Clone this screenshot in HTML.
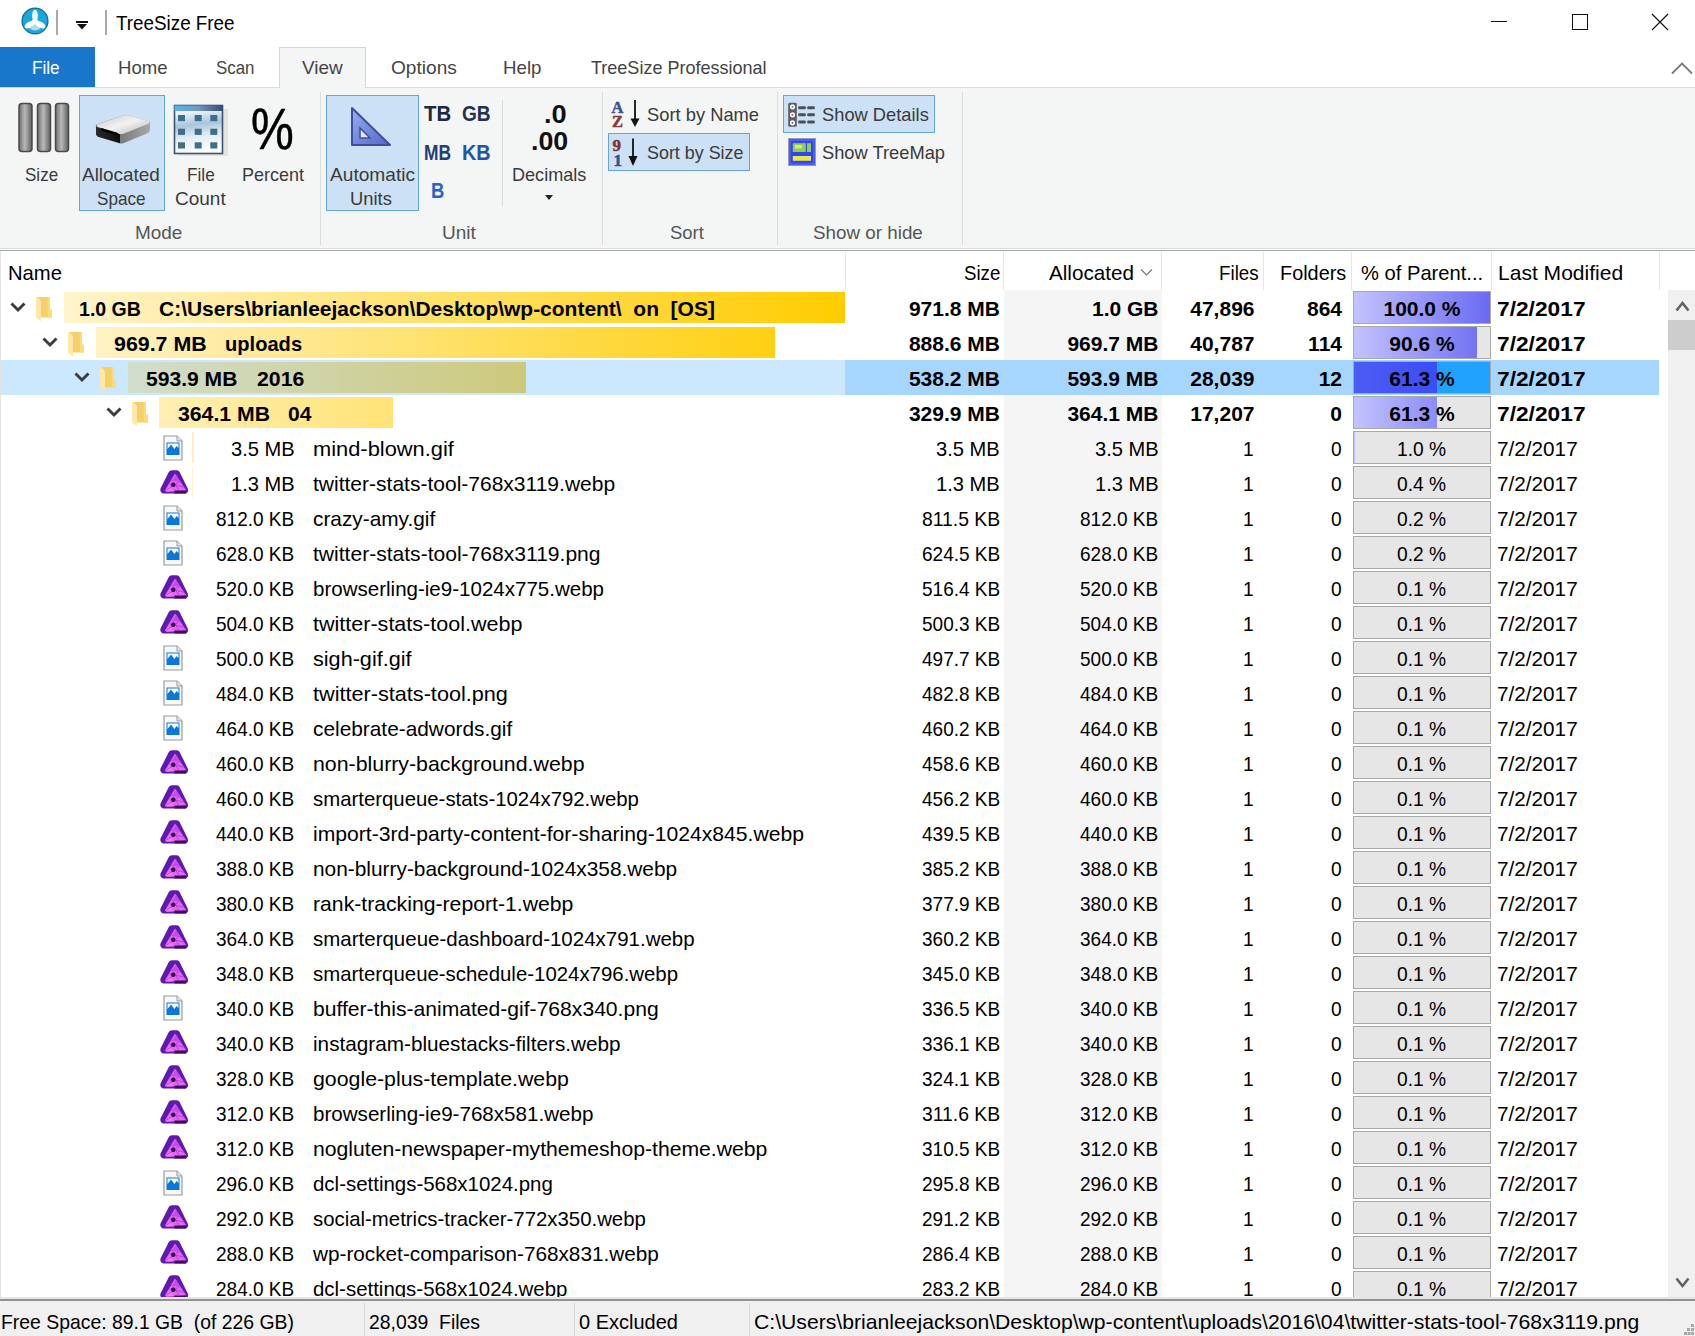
<!DOCTYPE html>
<html><head><meta charset="utf-8"><title>TreeSize Free</title>
<style>
html,body{margin:0;padding:0}
body{width:1695px;height:1336px;overflow:hidden;position:relative;background:#fff;font-family:"Liberation Sans",sans-serif;color:#000}
.a{position:absolute}
.t{position:absolute;white-space:pre;line-height:1.117;}
</style></head><body>
<svg class="a" style="left:20px;top:6px" width="30" height="30" viewBox="0 0 30 30">
<circle cx="15" cy="15" r="12.9" fill="#19a7dd" stroke="#0e6f99" stroke-width="1.3"/>
<path d="M8.5 21.5 Q15 27.5 21.5 21.5 L15 16 Z" fill="#a9dcf0"/>
<ellipse cx="15" cy="9.6" rx="2.9" ry="5.8" fill="#fff"/>
<ellipse cx="15" cy="9.6" rx="2.9" ry="5.8" fill="#fff" transform="rotate(120 15 15.6)"/>
<ellipse cx="15" cy="9.6" rx="2.9" ry="5.8" fill="#fff" transform="rotate(240 15 15.6)"/>
<circle cx="15" cy="15.6" r="3" fill="#fff"/>
</svg>
<div class="a" style="left:56px;top:10px;width:2px;height:25px;background:#a9a9a9;"></div>
<div class="a" style="left:76px;top:21px;width:12px;height:2px;background:#111;"></div>
<svg class="a" style="left:77px;top:24px" width="10" height="6"><path d="M0 0 L10 0 L5 5.5 Z" fill="#111"/></svg>
<div class="a" style="left:105px;top:10px;width:2px;height:25px;background:#a9a9a9;"></div>
<div class="t" style="top:11.00px;font-size:21px;left:115.50px;transform:scaleX(0.8964);transform-origin:0 0;">TreeSize Free</div>
<div class="a" style="left:1491px;top:21px;width:16px;height:1px;background:#111;"></div>
<div class="a" style="left:1572px;top:14px;width:14px;height:14px;border:1px solid #111"></div>
<svg class="a" style="left:1651px;top:13px" width="18" height="18"><path d="M1 1 L17 17 M17 1 L1 17" stroke="#111" stroke-width="1.1"/></svg>
<div class="a" style="left:0px;top:47px;width:95px;height:40px;background:#1977cb;"></div>
<div class="a" style="left:0px;top:87px;width:1695px;height:1px;background:#d9dadb;"></div>
<div class="a" style="left:279px;top:47px;width:85px;height:41px;background:#f4f5f5;border:1px solid #d6d6d6;border-bottom:none"></div>
<div class="t" style="top:56.80px;font-size:19px;color:#fff;left:32.20px;transform:scaleX(0.9023);transform-origin:0 0;">File</div>
<div class="t" style="top:56.80px;font-size:19px;color:#444;left:118.00px;transform:scaleX(0.9777);transform-origin:0 0;">Home</div>
<div class="t" style="top:56.80px;font-size:19px;color:#444;left:215.50px;transform:scaleX(0.8887);transform-origin:0 0;">Scan</div>
<div class="t" style="top:56.80px;font-size:19px;color:#444;left:302.00px;transform:scaleX(0.9963);transform-origin:0 0;">View</div>
<div class="t" style="top:56.80px;font-size:19px;color:#444;left:390.60px;transform:scaleX(1.0053);transform-origin:0 0;">Options</div>
<div class="t" style="top:56.80px;font-size:19px;color:#444;left:503.00px;transform:scaleX(0.9835);transform-origin:0 0;">Help</div>
<div class="t" style="top:56.80px;font-size:19px;color:#444;left:590.60px;transform:scaleX(0.9479);transform-origin:0 0;">TreeSize Professional</div>
<svg class="a" style="left:1670px;top:60px" width="24" height="16"><path d="M2 13.5 L12 3.5 L22 13.5" fill="none" stroke="#7a7a7a" stroke-width="1.8"/></svg>
<div class="a" style="left:0px;top:88px;width:1695px;height:160px;background:#f4f5f5;"></div>
<div class="a" style="left:0px;top:248px;width:1695px;height:1px;background:#dcdcdc;"></div>
<div class="a" style="left:0px;top:249px;width:1695px;height:1px;background:#ffffff;"></div>
<div class="a" style="left:0px;top:250px;width:1695px;height:1px;background:#a9aaad;"></div>
<svg class="a" style="left:17px;top:102px" width="54" height="51" viewBox="0 0 54 51">
<defs><linearGradient id="gb" x1="0" x2="1"><stop offset="0" stop-color="#6d6d6d"/><stop offset=".45" stop-color="#b9b9b9"/><stop offset="1" stop-color="#5e5e5e"/></linearGradient></defs>
<rect x="2" y="1.5" width="13" height="48" rx="3" fill="url(#gb)" stroke="#4a4a4a" stroke-width="1.5"/>
<rect x="20.5" y="1.5" width="13" height="48" rx="3" fill="url(#gb)" stroke="#4a4a4a" stroke-width="1.5"/>
<rect x="38.5" y="1.5" width="13" height="48" rx="3" fill="url(#gb)" stroke="#4a4a4a" stroke-width="1.5"/>
</svg>
<div class="t" style="top:163.81px;font-size:19px;color:#3a3a3a;left:25.30px;transform:scaleX(0.8957);transform-origin:0 0;">Size</div>
<div class="a" style="left:79px;top:95px;width:86px;height:116px;background:#cce1f6;border:1px solid #64a3e4;box-sizing:border-box;"></div>
<svg class="a" style="left:93px;top:112px" width="60" height="36" viewBox="0 0 60 36">
<defs><linearGradient id="dtop" x1="0" y1="0" x2="1" y2="1"><stop offset="0" stop-color="#c9c9c9"/><stop offset=".5" stop-color="#f2f2f2"/><stop offset="1" stop-color="#b5b5b5"/></linearGradient>
<linearGradient id="dfl" x1="0" y1="0" x2="1" y2="0"><stop offset="0" stop-color="#2b2b2b"/><stop offset="1" stop-color="#0d0d0d"/></linearGradient>
<linearGradient id="dr" x1="0" y1="0" x2="1" y2="0"><stop offset="0" stop-color="#555"/><stop offset="1" stop-color="#a8a8a8"/></linearGradient></defs>
<path d="M3 15 Q2 13 5 12 L30 3.5 Q33 2.5 36 3.5 L55 9 Q58 10 57 12 L57 18 Q57 20 54 21.5 L31 31 Q28 32 25 31 L6 25 Q3 24 3 21 Z" fill="url(#dr)"/>
<path d="M3 15 L27 22 L27 31 L6 25 Q3 24 3 21 Z" fill="url(#dfl)"/>
<path d="M5 12 L30 3.5 Q33 2.5 36 3.5 L55 9 Q58 10 55 12 L31 21.5 Q28 22.5 25 21.5 L5 15 Q2 13.5 5 12 Z" fill="url(#dtop)"/>
<path d="M9 17.5 L24 22" stroke="#000" stroke-width="2.5" stroke-linecap="round"/>
</svg>
<div class="t" style="top:163.81px;font-size:19px;color:#3a3a3a;left:82.20px;transform:scaleX(0.9964);transform-origin:0 0;">Allocated</div>
<div class="t" style="top:187.81px;font-size:19px;color:#3a3a3a;left:96.60px;transform:scaleX(0.9004);transform-origin:0 0;">Space</div>
<svg class="a" style="left:173px;top:104px" width="58" height="53" viewBox="0 0 58 53">
<defs><linearGradient id="gfc" x1="0" y1="0" x2=".15" y2="1"><stop offset="0" stop-color="#f6fafc"/><stop offset=".2" stop-color="#e6f0f6"/><stop offset=".45" stop-color="#a9c6d9"/><stop offset=".7" stop-color="#e2edf3"/><stop offset="1" stop-color="#fafcfd"/></linearGradient>
<linearGradient id="gfs" x1="0" x2="1"><stop offset="0" stop-color="#5ab4ea"/><stop offset=".5" stop-color="#6f98c0"/><stop offset="1" stop-color="#334e78"/></linearGradient></defs>
<rect x="5" y="5" width="50" height="47" fill="#d8d8d8" opacity=".6"/>
<rect x="1.5" y="1.5" width="48" height="48" fill="url(#gfc)" stroke="#3c5470" stroke-width="1.6"/>
<rect x="1.5" y="1.5" width="48" height="5.5" fill="url(#gfs)"/>
<g fill="#3f6d8c"><rect x="5" y="11" width="7" height="6.2"/><rect x="21.7" y="11" width="7" height="6.2"/><rect x="37.3" y="11" width="7" height="6.2"/>
<rect x="5" y="24.7" width="7" height="6.2"/><rect x="21.7" y="24.7" width="7" height="6.2"/><rect x="37.3" y="24.7" width="7" height="6.2"/>
<rect x="5" y="38.3" width="7" height="6.2"/><rect x="21.7" y="38.3" width="7" height="6.2"/><rect x="37.3" y="38.3" width="7" height="6.2"/></g>
</svg>
<div class="t" style="top:163.81px;font-size:19px;color:#3a3a3a;left:186.50px;transform:scaleX(0.9055);transform-origin:0 0;">File</div>
<div class="t" style="top:187.81px;font-size:19px;color:#3a3a3a;left:175.20px;transform:scaleX(0.9994);transform-origin:0 0;">Count</div>
<div class="t" style="top:96.51px;font-size:58px;left:251.20px;transform:scaleX(0.8291);transform-origin:0 0;-webkit-text-stroke:0.5px #000;">%</div>
<div class="t" style="top:163.81px;font-size:19px;color:#3a3a3a;left:241.80px;transform:scaleX(0.9457);transform-origin:0 0;">Percent</div>
<div class="t" style="top:221.50px;font-size:19px;color:#555;left:134.70px;transform:scaleX(0.9958);transform-origin:0 0;">Mode</div>
<div class="a" style="left:320px;top:92px;width:1px;height:153px;background:#dcdcdc;"></div>
<div class="a" style="left:326px;top:95px;width:93px;height:116px;background:#cce1f6;border:1px solid #64a3e4;box-sizing:border-box;"></div>
<svg class="a" style="left:349px;top:106px" width="44" height="42" viewBox="0 0 44 42">
<defs><linearGradient id="tri" x1="0" y1="0" x2="1" y2="1"><stop offset="0" stop-color="#9aaef0"/><stop offset="1" stop-color="#5067c8"/></linearGradient></defs>
<path d="M3 2 L41 39 L3 39 Z" fill="url(#tri)" stroke="#3f4fa0" stroke-width="2" stroke-linejoin="round"/>
<path d="M11 22 L21 32 L11 32 Z" fill="#dfe7fb" stroke="#3f4fa0" stroke-width="1.5"/>
</svg>
<div class="t" style="top:163.81px;font-size:19px;color:#3a3a3a;left:329.50px;transform:scaleX(1.0065);transform-origin:0 0;">Automatic</div>
<div class="t" style="top:187.81px;font-size:19px;color:#3a3a3a;left:350.40px;transform:scaleX(0.9672);transform-origin:0 0;">Units</div>
<div class="t" style="top:101.59px;font-size:22px;font-weight:700;color:#1c2740;left:424.20px;transform:scaleX(0.9227);transform-origin:0 0;">TB</div>
<div class="t" style="top:101.59px;font-size:22px;font-weight:700;color:#223253;left:461.70px;transform:scaleX(0.8667);transform-origin:0 0;">GB</div>
<div class="t" style="top:140.89px;font-size:22px;font-weight:700;color:#213f78;left:424.00px;transform:scaleX(0.7892);transform-origin:0 0;">MB</div>
<div class="t" style="top:140.89px;font-size:22px;font-weight:700;color:#2255a8;left:461.70px;transform:scaleX(0.8997);transform-origin:0 0;">KB</div>
<div class="t" style="top:179.09px;font-size:22px;font-weight:700;color:#2a63c4;left:430.70px;transform:scaleX(0.8396);transform-origin:0 0;">B</div>
<div class="a" style="left:502px;top:100px;width:1px;height:107px;background:#dcdcdc;"></div>
<div class="t" style="top:99.77px;font-size:26px;font-weight:700;color:#111;left:544.30px;transform:scaleX(1.0456);transform-origin:0 0;">.0</div>
<div class="t" style="top:126.87px;font-size:26px;font-weight:700;color:#111;left:530.70px;transform:scaleX(1.0293);transform-origin:0 0;">.00</div>
<div class="t" style="top:164.21px;font-size:19px;color:#3a3a3a;left:511.90px;transform:scaleX(0.9515);transform-origin:0 0;">Decimals</div>
<svg class="a" style="left:545px;top:195px" width="9" height="6"><path d="M0 0 L8 0 L4 5 Z" fill="#222"/></svg>
<div class="t" style="top:221.50px;font-size:19px;color:#555;left:441.60px;transform:scaleX(1.0024);transform-origin:0 0;">Unit</div>
<div class="a" style="left:602px;top:92px;width:1px;height:153px;background:#dcdcdc;"></div>
<svg class="a" style="left:611px;top:99px" width="32" height="30" viewBox="0 0 32 30">
<text x="0.5" y="13.5" font-family="Liberation Serif" font-weight="700" font-size="16.5" fill="#3a5395" stroke="#3a5395" stroke-width=".5">A</text>
<text x="1" y="28" font-family="Liberation Serif" font-weight="700" font-size="16.5" fill="#8b3838" stroke="#8b3838" stroke-width=".5">Z</text>
<path d="M24 1 L24 24" stroke="#111" stroke-width="1.8"/><path d="M19.5 19.5 L24 28 L28.5 19.5 Z" fill="#111"/>
</svg>
<div class="t" style="top:104.31px;font-size:19px;color:#3a3a3a;left:646.70px;transform:scaleX(0.9648);transform-origin:0 0;">Sort by Name</div>
<div class="a" style="left:608px;top:133px;width:142px;height:38px;background:#cce1f6;border:1px solid #64a3e4;box-sizing:border-box;"></div>
<svg class="a" style="left:612px;top:137px" width="32" height="30" viewBox="0 0 32 30">
<text x="0.5" y="14" font-family="Liberation Serif" font-weight="700" font-size="17" fill="#7e3131" stroke="#7e3131" stroke-width=".5">9</text>
<text x="1.5" y="28.5" font-family="Liberation Serif" font-weight="700" font-size="17" fill="#34508f" stroke="#34508f" stroke-width=".5">1</text>
<path d="M21 1.5 L21 24" stroke="#111" stroke-width="1.8"/><path d="M16.5 19 L21 29 L25.5 19 Z" fill="#111"/>
</svg>
<div class="t" style="top:142.11px;font-size:19px;color:#3a3a3a;left:646.70px;transform:scaleX(0.9413);transform-origin:0 0;">Sort by Size</div>
<div class="t" style="top:221.50px;font-size:19px;color:#555;left:670.30px;transform:scaleX(0.9723);transform-origin:0 0;">Sort</div>
<div class="a" style="left:777px;top:92px;width:1px;height:153px;background:#dcdcdc;"></div>
<div class="a" style="left:783px;top:95px;width:152px;height:38px;background:#cce1f6;border:1px solid #64a3e4;box-sizing:border-box;"></div>
<svg class="a" style="left:788px;top:102px" width="28" height="26" viewBox="0 0 28 26">
<rect x="0.2" y="0.8" width="8.6" height="24" rx="1.5" fill="#5a5f66"/>
<circle cx="4.5" cy="4.8" r="2.6" fill="#fafafa"/><circle cx="4.5" cy="12.8" r="2.6" fill="#fafafa"/><circle cx="4.5" cy="20.8" r="2.6" fill="#fafafa"/>
<circle cx="4.5" cy="4.8" r=".9" fill="#4a9a4a"/><circle cx="4.5" cy="12.8" r="1" fill="#e04a30"/><circle cx="4.5" cy="20.8" r=".9" fill="#3a5ac0"/>
<g fill="#4a4f58"><rect x="10.2" y="4.3" width="7.6" height="3" rx="1"/><rect x="19.2" y="4.3" width="7.6" height="3" rx="1"/><rect x="10.2" y="11.3" width="7.6" height="3" rx="1"/><rect x="19.2" y="11.3" width="7.6" height="3" rx="1"/><rect x="10.2" y="18.4" width="7.6" height="3" rx="1"/><rect x="19.2" y="18.4" width="7.6" height="3" rx="1"/></g>
</svg>
<div class="t" style="top:104.31px;font-size:19px;color:#3a3a3a;left:821.60px;transform:scaleX(0.9633);transform-origin:0 0;">Show Details</div>
<svg class="a" style="left:788px;top:138px" width="28" height="28" viewBox="0 0 28 28">
<rect x="0.5" y="0.5" width="27" height="27" fill="#3046f2" stroke="#9a9aa8" stroke-width="1"/>
<rect x="2" y="2" width="24" height="24" fill="none" stroke="#5a6cff" stroke-width="1.2"/>
<rect x="4.8" y="5.2" width="13" height="8.8" fill="#8fd04a"/><rect x="7" y="7" width="7" height="3.5" fill="#d8e880"/>
<rect x="19" y="5.2" width="4" height="8.8" fill="#8fd04a"/>
<rect x="4.8" y="18" width="18.2" height="4.8" fill="#e8e850"/>
</svg>
<div class="t" style="top:142.11px;font-size:19px;color:#3a3a3a;left:821.60px;transform:scaleX(0.9626);transform-origin:0 0;">Show TreeMap</div>
<div class="t" style="top:221.50px;font-size:19px;color:#555;left:812.70px;transform:scaleX(0.9904);transform-origin:0 0;">Show or hide</div>
<div class="a" style="left:962px;top:92px;width:1px;height:153px;background:#dcdcdc;"></div>
<div class="a" style="left:0px;top:251px;width:1px;height:1046px;background:#e3e3e3;"></div>
<div class="t" style="top:261.00px;font-size:21px;left:8.20px;transform:scaleX(0.9631);transform-origin:0 0;">Name</div>
<div class="a" style="left:845px;top:252px;width:1px;height:38px;background:#e5e5e5;"></div>
<div class="a" style="left:1003px;top:252px;width:1px;height:38px;background:#e5e5e5;"></div>
<div class="a" style="left:1161px;top:252px;width:1px;height:38px;background:#e5e5e5;"></div>
<div class="a" style="left:1263px;top:252px;width:1px;height:38px;background:#e5e5e5;"></div>
<div class="a" style="left:1351px;top:252px;width:1px;height:38px;background:#e5e5e5;"></div>
<div class="a" style="left:1491px;top:252px;width:1px;height:38px;background:#e5e5e5;"></div>
<div class="a" style="left:1659px;top:252px;width:1px;height:38px;background:#e5e5e5;"></div>
<div class="t" style="top:261.00px;font-size:21px;left:963.74px;transform:scaleX(0.8875);transform-origin:0 0;">Size</div>
<div class="t" style="top:261.00px;font-size:21px;left:1049.03px;transform:scaleX(0.9835);transform-origin:0 0;">Allocated</div>
<svg class="a" style="left:1140px;top:268px" width="13" height="9"><path d="M1 1.5 L6.5 7 L12 1.5" fill="none" stroke="#777" stroke-width="1.2"/></svg>
<div class="t" style="top:261.00px;font-size:21px;left:1218.83px;transform:scaleX(0.8948);transform-origin:0 0;">Files</div>
<div class="t" style="top:261.00px;font-size:21px;left:1279.78px;transform:scaleX(0.9457);transform-origin:0 0;">Folders</div>
<div class="t" style="top:261.00px;font-size:21px;left:1360.80px;transform:scaleX(0.9602);transform-origin:0 0;">% of Parent...</div>
<div class="t" style="top:261.00px;font-size:21px;left:1498.00px;transform:scaleX(1.0020);transform-origin:0 0;">Last Modified</div>
<div class="a" style="left:1004px;top:290px;width:158px;height:1007px;background:#f5f5f5;"></div>
<div class="a" style="left:64px;top:292px;width:781px;height:31px;background:linear-gradient(to right,#fff4cc,#ffcc00);"></div>
<svg class="a" style="left:9.5px;top:301.5px" width="16" height="11"><path d="M1.5 1.5 L8 8 L14.5 1.5" fill="none" stroke="#3c3c3c" stroke-width="2.9"/></svg>
<svg class="a" style="left:36px;top:297px" width="17" height="25" viewBox="0 0 17 25">
<path d="M1.2 0 L14 0 L14 12.7 L16 12.7 L16 20.6 L5 20.6 L5 4.7 Z" fill="#f5cf68"/>
<path d="M11.5 0 L14 0 L14 12.7 L16 12.7 L16 20.6 L12 20.6 Z" fill="#fcdc76"/>
<path d="M0 0 L1.4 0 L5 4.7 L5 24.2 L0 20.8 Z" fill="#fde8a8"/>
</svg>
<div class="t" style="top:297.00px;font-size:21px;font-weight:700;left:78.70px;transform:scaleX(0.9314);transform-origin:0 0;">1.0 GB</div>
<div class="t" style="top:297.00px;font-size:21px;font-weight:700;left:159.40px;transform:scaleX(0.9987);transform-origin:0 0;">C:\Users\brianleejackson\Desktop\wp-content\  on  [OS]</div>
<div class="t" style="top:297.00px;font-size:21px;font-weight:700;left:908.95px;transform:scaleX(1.0000);transform-origin:0 0;">971.8 MB</div>
<div class="t" style="top:297.00px;font-size:21px;font-weight:700;left:1091.97px;transform:scaleX(1.0000);transform-origin:0 0;">1.0 GB</div>
<div class="t" style="top:297.00px;font-size:21px;font-weight:700;left:1190.27px;transform:scaleX(1.0000);transform-origin:0 0;">47,896</div>
<div class="t" style="top:297.00px;font-size:21px;font-weight:700;left:1306.96px;transform:scaleX(1.0000);transform-origin:0 0;">864</div>
<div class="a" style="left:1353px;top:291px;width:138px;height:33px;box-sizing:border-box;border:1px solid #a9a9a9;background:#e6e6e6"></div>
<div class="a" style="left:1354px;top:292px;width:136px;height:31px;background:linear-gradient(to right,#c3c3ff,#6a6af2);background-size:136px 31px"></div>
<div class="t" style="top:297.00px;font-size:21px;font-weight:700;left:1383.46px;transform:scaleX(1.0000);transform-origin:0 0;">100.0 %</div>
<div class="t" style="top:297.00px;font-size:21px;font-weight:700;left:1497.00px;transform:scaleX(1.0832);transform-origin:0 0;">7/2/2017</div>
<div class="a" style="left:96px;top:327px;width:679px;height:31px;background:linear-gradient(to right,#fff2c4,#ffd012);"></div>
<svg class="a" style="left:41.5px;top:336.5px" width="16" height="11"><path d="M1.5 1.5 L8 8 L14.5 1.5" fill="none" stroke="#3c3c3c" stroke-width="2.9"/></svg>
<svg class="a" style="left:68px;top:332px" width="17" height="25" viewBox="0 0 17 25">
<path d="M1.2 0 L14 0 L14 12.7 L16 12.7 L16 20.6 L5 20.6 L5 4.7 Z" fill="#f5cf68"/>
<path d="M11.5 0 L14 0 L14 12.7 L16 12.7 L16 20.6 L12 20.6 Z" fill="#fcdc76"/>
<path d="M0 0 L1.4 0 L5 4.7 L5 24.2 L0 20.8 Z" fill="#fde8a8"/>
</svg>
<div class="t" style="top:332.00px;font-size:21px;font-weight:700;left:113.50px;transform:scaleX(1.0172);transform-origin:0 0;">969.7 MB</div>
<div class="t" style="top:332.00px;font-size:21px;font-weight:700;left:224.60px;transform:scaleX(0.9573);transform-origin:0 0;">uploads</div>
<div class="t" style="top:332.00px;font-size:21px;font-weight:700;left:908.95px;transform:scaleX(1.0000);transform-origin:0 0;">888.6 MB</div>
<div class="t" style="top:332.00px;font-size:21px;font-weight:700;left:1067.45px;transform:scaleX(1.0000);transform-origin:0 0;">969.7 MB</div>
<div class="t" style="top:332.00px;font-size:21px;font-weight:700;left:1190.27px;transform:scaleX(1.0000);transform-origin:0 0;">40,787</div>
<div class="t" style="top:332.00px;font-size:21px;font-weight:700;left:1308.12px;transform:scaleX(1.0000);transform-origin:0 0;">114</div>
<div class="a" style="left:1353px;top:326px;width:138px;height:33px;box-sizing:border-box;border:1px solid #a9a9a9;background:#e6e6e6"></div>
<div class="a" style="left:1354px;top:327px;width:123px;height:31px;background:linear-gradient(to right,#c3c3ff,#6a6af2);background-size:136px 31px"></div>
<div class="t" style="top:332.00px;font-size:21px;font-weight:700;left:1389.29px;transform:scaleX(1.0000);transform-origin:0 0;">90.6 %</div>
<div class="t" style="top:332.00px;font-size:21px;font-weight:700;left:1497.00px;transform:scaleX(1.0832);transform-origin:0 0;">7/2/2017</div>
<div class="a" style="left:1px;top:360px;width:844px;height:35px;background:#cce8ff;"></div>
<div class="a" style="left:845px;top:360px;width:814px;height:35px;background:#a6d5fd;"></div>
<div class="a" style="left:128px;top:362px;width:398px;height:31px;background:linear-gradient(to right,#d2ddcc,#cdc97b);"></div>
<svg class="a" style="left:73.5px;top:371.5px" width="16" height="11"><path d="M1.5 1.5 L8 8 L14.5 1.5" fill="none" stroke="#3c3c3c" stroke-width="2.9"/></svg>
<svg class="a" style="left:100px;top:367px" width="17" height="25" viewBox="0 0 17 25">
<path d="M1.2 0 L14 0 L14 12.7 L16 12.7 L16 20.6 L5 20.6 L5 4.7 Z" fill="#f5cf68"/>
<path d="M11.5 0 L14 0 L14 12.7 L16 12.7 L16 20.6 L12 20.6 Z" fill="#fcdc76"/>
<path d="M0 0 L1.4 0 L5 4.7 L5 24.2 L0 20.8 Z" fill="#fde8a8"/>
</svg>
<div class="t" style="top:367.00px;font-size:21px;font-weight:700;left:146.00px;transform:scaleX(1.0040);transform-origin:0 0;">593.9 MB</div>
<div class="t" style="top:367.00px;font-size:21px;font-weight:700;left:256.50px;transform:scaleX(1.0123);transform-origin:0 0;">2016</div>
<div class="t" style="top:367.00px;font-size:21px;font-weight:700;left:908.95px;transform:scaleX(1.0000);transform-origin:0 0;">538.2 MB</div>
<div class="t" style="top:367.00px;font-size:21px;font-weight:700;left:1067.45px;transform:scaleX(1.0000);transform-origin:0 0;">593.9 MB</div>
<div class="t" style="top:367.00px;font-size:21px;font-weight:700;left:1190.27px;transform:scaleX(1.0000);transform-origin:0 0;">28,039</div>
<div class="t" style="top:367.00px;font-size:21px;font-weight:700;left:1318.64px;transform:scaleX(1.0000);transform-origin:0 0;">12</div>
<div class="a" style="left:1353px;top:361px;width:138px;height:33px;box-sizing:border-box;border:1px solid #a9a9a9;background:#22a2ff"></div>
<div class="a" style="left:1354px;top:362px;width:83px;height:31px;background:linear-gradient(to right,#4d5cf2,#3a4ef8)"></div>
<div class="t" style="top:367.00px;font-size:21px;font-weight:700;left:1389.29px;transform:scaleX(1.0000);transform-origin:0 0;">61.3 %</div>
<div class="t" style="top:367.00px;font-size:21px;font-weight:700;left:1497.00px;transform:scaleX(1.0832);transform-origin:0 0;">7/2/2017</div>
<div class="a" style="left:159px;top:397px;width:234px;height:31px;background:linear-gradient(to right,#ffefb3,#ffe376);"></div>
<svg class="a" style="left:105.5px;top:406.5px" width="16" height="11"><path d="M1.5 1.5 L8 8 L14.5 1.5" fill="none" stroke="#3c3c3c" stroke-width="2.9"/></svg>
<svg class="a" style="left:132px;top:402px" width="17" height="25" viewBox="0 0 17 25">
<path d="M1.2 0 L14 0 L14 12.7 L16 12.7 L16 20.6 L5 20.6 L5 4.7 Z" fill="#f5cf68"/>
<path d="M11.5 0 L14 0 L14 12.7 L16 12.7 L16 20.6 L12 20.6 Z" fill="#fcdc76"/>
<path d="M0 0 L1.4 0 L5 4.7 L5 24.2 L0 20.8 Z" fill="#fde8a8"/>
</svg>
<div class="t" style="top:402.00px;font-size:21px;font-weight:700;left:177.90px;transform:scaleX(1.0106);transform-origin:0 0;">364.1 MB</div>
<div class="t" style="top:402.00px;font-size:21px;font-weight:700;left:288.30px;transform:scaleX(1.0039);transform-origin:0 0;">04</div>
<div class="t" style="top:402.00px;font-size:21px;font-weight:700;left:908.95px;transform:scaleX(1.0000);transform-origin:0 0;">329.9 MB</div>
<div class="t" style="top:402.00px;font-size:21px;font-weight:700;left:1067.45px;transform:scaleX(1.0000);transform-origin:0 0;">364.1 MB</div>
<div class="t" style="top:402.00px;font-size:21px;font-weight:700;left:1190.27px;transform:scaleX(1.0000);transform-origin:0 0;">17,207</div>
<div class="t" style="top:402.00px;font-size:21px;font-weight:700;left:1330.32px;transform:scaleX(1.0000);transform-origin:0 0;">0</div>
<div class="a" style="left:1353px;top:396px;width:138px;height:33px;box-sizing:border-box;border:1px solid #a9a9a9;background:#e6e6e6"></div>
<div class="a" style="left:1354px;top:397px;width:83px;height:31px;background:linear-gradient(to right,#c3c3ff,#6a6af2);background-size:136px 31px"></div>
<div class="t" style="top:402.00px;font-size:21px;font-weight:700;left:1389.29px;transform:scaleX(1.0000);transform-origin:0 0;">61.3 %</div>
<div class="t" style="top:402.00px;font-size:21px;font-weight:700;left:1497.00px;transform:scaleX(1.0832);transform-origin:0 0;">7/2/2017</div>
<div class="a" style="left:0;top:0;width:1668px;height:1297px;overflow:hidden">
<svg class="a" style="left:163px;top:435px" width="20" height="26" viewBox="0 0 20 26">
<path d="M1 1 L14 1 L19 6 L19 25 L1 25 Z" fill="#f6f8fa" stroke="#9b9b9b" stroke-width="1.2"/>
<path d="M14 1 L14 6 L19 6" fill="#e8e8e8" stroke="#9b9b9b" stroke-width="1"/>
<rect x="3.5" y="7.5" width="13" height="12.5" fill="#0a78d8"/>
<path d="M4.5 8.5 L15.5 8.5 L15.5 13 L13.5 11 L11.5 14 L8 9.5 L4.5 14 Z" fill="#fff"/>
</svg>
<div class="a" style="left:192px;top:432px;width:2px;height:31px;background:#ffefc0;"></div>
<div class="t" style="top:437.00px;font-size:21px;left:230.91px;transform:scaleX(0.9558);transform-origin:0 0;">3.5 MB</div>
<div class="t" style="top:437.00px;font-size:21px;left:312.70px;transform:scaleX(1.0407);transform-origin:0 0;">mind-blown.gif</div>
<div class="t" style="top:437.00px;font-size:21px;left:936.41px;transform:scaleX(0.9558);transform-origin:0 0;">3.5 MB</div>
<div class="t" style="top:437.00px;font-size:21px;left:1094.91px;transform:scaleX(0.9558);transform-origin:0 0;">3.5 MB</div>
<div class="t" style="top:437.00px;font-size:21px;left:1243.35px;transform:scaleX(0.9116);transform-origin:0 0;">1</div>
<div class="t" style="top:437.00px;font-size:21px;left:1331.35px;transform:scaleX(0.9116);transform-origin:0 0;">0</div>
<div class="a" style="left:1353px;top:431px;width:138px;height:33px;box-sizing:border-box;border:1px solid #a9a9a9;background:#e6e6e6"></div>
<div class="a" style="left:1354px;top:432px;width:1px;height:31px;background:linear-gradient(to right,#c3c3ff,#6a6af2);background-size:136px 31px"></div>
<div class="t" style="top:437.00px;font-size:21px;left:1397.47px;transform:scaleX(0.9143);transform-origin:0 0;">1.0 %</div>
<div class="t" style="top:437.00px;font-size:21px;left:1496.60px;transform:scaleX(0.9866);transform-origin:0 0;">7/2/2017</div>
<svg class="a" style="left:160px;top:470px" width="29" height="25" viewBox="0 0 29 25">
<path d="M8.8 2 Q9.8 0.2 12 0.2 L17 0.2 Q18.6 0.2 19.6 2 L27.6 18.2 Q28.8 20.6 27.2 22.6 L26 23.6 L4.2 23.6 Q1.2 23.6 0.4 20.8 Q0 19.2 1 17.6 Z" fill="#5c1aae"/>
<path d="M15 3.6 L26.4 20.6 L14 21.4 L6 21.8 Q4.6 21.2 5.4 19.6 Z" fill="#e466f0"/>
<path d="M16 4.8 L21 12.8 L12.5 10.5 Z" fill="#c64ae8"/>
<path d="M9 16 L14 21 L7.2 21.6 Q6 21 6.6 19.6 Z" fill="#f07af6"/>
<path d="M14.5 20.6 L26.5 20.6 L26 23.6 L14.5 23.6 Z" fill="#3e0c62"/>
<path d="M11 8.5 L19.5 21 M6.8 19.8 L18.5 12.2 M9.5 14 L24 17" stroke="#b040d8" stroke-width=".9" fill="none"/>
<circle cx="13.3" cy="14.8" r="2.2" fill="#2c0848"/>
</svg>
<div class="a" style="left:192px;top:467px;width:1px;height:31px;background:#fff3d0;"></div>
<div class="t" style="top:472.00px;font-size:21px;left:230.91px;transform:scaleX(0.9558);transform-origin:0 0;">1.3 MB</div>
<div class="t" style="top:472.00px;font-size:21px;left:312.70px;transform:scaleX(1.0007);transform-origin:0 0;">twitter-stats-tool-768x3119.webp</div>
<div class="t" style="top:472.00px;font-size:21px;left:936.41px;transform:scaleX(0.9558);transform-origin:0 0;">1.3 MB</div>
<div class="t" style="top:472.00px;font-size:21px;left:1094.91px;transform:scaleX(0.9558);transform-origin:0 0;">1.3 MB</div>
<div class="t" style="top:472.00px;font-size:21px;left:1243.35px;transform:scaleX(0.9116);transform-origin:0 0;">1</div>
<div class="t" style="top:472.00px;font-size:21px;left:1331.35px;transform:scaleX(0.9116);transform-origin:0 0;">0</div>
<div class="a" style="left:1353px;top:466px;width:138px;height:33px;box-sizing:border-box;border:1px solid #a9a9a9;background:#e6e6e6"></div>
<div class="t" style="top:472.00px;font-size:21px;left:1397.47px;transform:scaleX(0.9143);transform-origin:0 0;">0.4 %</div>
<div class="t" style="top:472.00px;font-size:21px;left:1496.60px;transform:scaleX(0.9866);transform-origin:0 0;">7/2/2017</div>
<svg class="a" style="left:163px;top:505px" width="20" height="26" viewBox="0 0 20 26">
<path d="M1 1 L14 1 L19 6 L19 25 L1 25 Z" fill="#f6f8fa" stroke="#9b9b9b" stroke-width="1.2"/>
<path d="M14 1 L14 6 L19 6" fill="#e8e8e8" stroke="#9b9b9b" stroke-width="1"/>
<rect x="3.5" y="7.5" width="13" height="12.5" fill="#0a78d8"/>
<path d="M4.5 8.5 L15.5 8.5 L15.5 13 L13.5 11 L11.5 14 L8 9.5 L4.5 14 Z" fill="#fff"/>
</svg>
<div class="t" style="top:507.00px;font-size:21px;left:216.34px;transform:scaleX(0.9046);transform-origin:0 0;">812.0 KB</div>
<div class="t" style="top:507.00px;font-size:21px;left:312.70px;transform:scaleX(0.9916);transform-origin:0 0;">crazy-amy.gif</div>
<div class="t" style="top:507.00px;font-size:21px;left:921.84px;transform:scaleX(0.9213);transform-origin:0 0;">811.5 KB</div>
<div class="t" style="top:507.00px;font-size:21px;left:1080.34px;transform:scaleX(0.9046);transform-origin:0 0;">812.0 KB</div>
<div class="t" style="top:507.00px;font-size:21px;left:1243.35px;transform:scaleX(0.9116);transform-origin:0 0;">1</div>
<div class="t" style="top:507.00px;font-size:21px;left:1331.35px;transform:scaleX(0.9116);transform-origin:0 0;">0</div>
<div class="a" style="left:1353px;top:501px;width:138px;height:33px;box-sizing:border-box;border:1px solid #a9a9a9;background:#e6e6e6"></div>
<div class="t" style="top:507.00px;font-size:21px;left:1397.47px;transform:scaleX(0.9143);transform-origin:0 0;">0.2 %</div>
<div class="t" style="top:507.00px;font-size:21px;left:1496.60px;transform:scaleX(0.9866);transform-origin:0 0;">7/2/2017</div>
<svg class="a" style="left:163px;top:540px" width="20" height="26" viewBox="0 0 20 26">
<path d="M1 1 L14 1 L19 6 L19 25 L1 25 Z" fill="#f6f8fa" stroke="#9b9b9b" stroke-width="1.2"/>
<path d="M14 1 L14 6 L19 6" fill="#e8e8e8" stroke="#9b9b9b" stroke-width="1"/>
<rect x="3.5" y="7.5" width="13" height="12.5" fill="#0a78d8"/>
<path d="M4.5 8.5 L15.5 8.5 L15.5 13 L13.5 11 L11.5 14 L8 9.5 L4.5 14 Z" fill="#fff"/>
</svg>
<div class="t" style="top:542.00px;font-size:21px;left:216.34px;transform:scaleX(0.9046);transform-origin:0 0;">628.0 KB</div>
<div class="t" style="top:542.00px;font-size:21px;left:312.70px;transform:scaleX(1.0027);transform-origin:0 0;">twitter-stats-tool-768x3119.png</div>
<div class="t" style="top:542.00px;font-size:21px;left:921.84px;transform:scaleX(0.9046);transform-origin:0 0;">624.5 KB</div>
<div class="t" style="top:542.00px;font-size:21px;left:1080.34px;transform:scaleX(0.9046);transform-origin:0 0;">628.0 KB</div>
<div class="t" style="top:542.00px;font-size:21px;left:1243.35px;transform:scaleX(0.9116);transform-origin:0 0;">1</div>
<div class="t" style="top:542.00px;font-size:21px;left:1331.35px;transform:scaleX(0.9116);transform-origin:0 0;">0</div>
<div class="a" style="left:1353px;top:536px;width:138px;height:33px;box-sizing:border-box;border:1px solid #a9a9a9;background:#e6e6e6"></div>
<div class="t" style="top:542.00px;font-size:21px;left:1397.47px;transform:scaleX(0.9143);transform-origin:0 0;">0.2 %</div>
<div class="t" style="top:542.00px;font-size:21px;left:1496.60px;transform:scaleX(0.9866);transform-origin:0 0;">7/2/2017</div>
<svg class="a" style="left:160px;top:575px" width="29" height="25" viewBox="0 0 29 25">
<path d="M8.8 2 Q9.8 0.2 12 0.2 L17 0.2 Q18.6 0.2 19.6 2 L27.6 18.2 Q28.8 20.6 27.2 22.6 L26 23.6 L4.2 23.6 Q1.2 23.6 0.4 20.8 Q0 19.2 1 17.6 Z" fill="#5c1aae"/>
<path d="M15 3.6 L26.4 20.6 L14 21.4 L6 21.8 Q4.6 21.2 5.4 19.6 Z" fill="#e466f0"/>
<path d="M16 4.8 L21 12.8 L12.5 10.5 Z" fill="#c64ae8"/>
<path d="M9 16 L14 21 L7.2 21.6 Q6 21 6.6 19.6 Z" fill="#f07af6"/>
<path d="M14.5 20.6 L26.5 20.6 L26 23.6 L14.5 23.6 Z" fill="#3e0c62"/>
<path d="M11 8.5 L19.5 21 M6.8 19.8 L18.5 12.2 M9.5 14 L24 17" stroke="#b040d8" stroke-width=".9" fill="none"/>
<circle cx="13.3" cy="14.8" r="2.2" fill="#2c0848"/>
</svg>
<div class="t" style="top:577.00px;font-size:21px;left:216.34px;transform:scaleX(0.9046);transform-origin:0 0;">520.0 KB</div>
<div class="t" style="top:577.00px;font-size:21px;left:312.70px;transform:scaleX(0.9776);transform-origin:0 0;">browserling-ie9-1024x775.webp</div>
<div class="t" style="top:577.00px;font-size:21px;left:921.84px;transform:scaleX(0.9046);transform-origin:0 0;">516.4 KB</div>
<div class="t" style="top:577.00px;font-size:21px;left:1080.34px;transform:scaleX(0.9046);transform-origin:0 0;">520.0 KB</div>
<div class="t" style="top:577.00px;font-size:21px;left:1243.35px;transform:scaleX(0.9116);transform-origin:0 0;">1</div>
<div class="t" style="top:577.00px;font-size:21px;left:1331.35px;transform:scaleX(0.9116);transform-origin:0 0;">0</div>
<div class="a" style="left:1353px;top:571px;width:138px;height:33px;box-sizing:border-box;border:1px solid #a9a9a9;background:#e6e6e6"></div>
<div class="t" style="top:577.00px;font-size:21px;left:1397.47px;transform:scaleX(0.9143);transform-origin:0 0;">0.1 %</div>
<div class="t" style="top:577.00px;font-size:21px;left:1496.60px;transform:scaleX(0.9866);transform-origin:0 0;">7/2/2017</div>
<svg class="a" style="left:160px;top:610px" width="29" height="25" viewBox="0 0 29 25">
<path d="M8.8 2 Q9.8 0.2 12 0.2 L17 0.2 Q18.6 0.2 19.6 2 L27.6 18.2 Q28.8 20.6 27.2 22.6 L26 23.6 L4.2 23.6 Q1.2 23.6 0.4 20.8 Q0 19.2 1 17.6 Z" fill="#5c1aae"/>
<path d="M15 3.6 L26.4 20.6 L14 21.4 L6 21.8 Q4.6 21.2 5.4 19.6 Z" fill="#e466f0"/>
<path d="M16 4.8 L21 12.8 L12.5 10.5 Z" fill="#c64ae8"/>
<path d="M9 16 L14 21 L7.2 21.6 Q6 21 6.6 19.6 Z" fill="#f07af6"/>
<path d="M14.5 20.6 L26.5 20.6 L26 23.6 L14.5 23.6 Z" fill="#3e0c62"/>
<path d="M11 8.5 L19.5 21 M6.8 19.8 L18.5 12.2 M9.5 14 L24 17" stroke="#b040d8" stroke-width=".9" fill="none"/>
<circle cx="13.3" cy="14.8" r="2.2" fill="#2c0848"/>
</svg>
<div class="t" style="top:612.00px;font-size:21px;left:216.34px;transform:scaleX(0.9046);transform-origin:0 0;">504.0 KB</div>
<div class="t" style="top:612.00px;font-size:21px;left:312.70px;transform:scaleX(1.0257);transform-origin:0 0;">twitter-stats-tool.webp</div>
<div class="t" style="top:612.00px;font-size:21px;left:921.84px;transform:scaleX(0.9046);transform-origin:0 0;">500.3 KB</div>
<div class="t" style="top:612.00px;font-size:21px;left:1080.34px;transform:scaleX(0.9046);transform-origin:0 0;">504.0 KB</div>
<div class="t" style="top:612.00px;font-size:21px;left:1243.35px;transform:scaleX(0.9116);transform-origin:0 0;">1</div>
<div class="t" style="top:612.00px;font-size:21px;left:1331.35px;transform:scaleX(0.9116);transform-origin:0 0;">0</div>
<div class="a" style="left:1353px;top:606px;width:138px;height:33px;box-sizing:border-box;border:1px solid #a9a9a9;background:#e6e6e6"></div>
<div class="t" style="top:612.00px;font-size:21px;left:1397.47px;transform:scaleX(0.9143);transform-origin:0 0;">0.1 %</div>
<div class="t" style="top:612.00px;font-size:21px;left:1496.60px;transform:scaleX(0.9866);transform-origin:0 0;">7/2/2017</div>
<svg class="a" style="left:163px;top:645px" width="20" height="26" viewBox="0 0 20 26">
<path d="M1 1 L14 1 L19 6 L19 25 L1 25 Z" fill="#f6f8fa" stroke="#9b9b9b" stroke-width="1.2"/>
<path d="M14 1 L14 6 L19 6" fill="#e8e8e8" stroke="#9b9b9b" stroke-width="1"/>
<rect x="3.5" y="7.5" width="13" height="12.5" fill="#0a78d8"/>
<path d="M4.5 8.5 L15.5 8.5 L15.5 13 L13.5 11 L11.5 14 L8 9.5 L4.5 14 Z" fill="#fff"/>
</svg>
<div class="t" style="top:647.00px;font-size:21px;left:216.34px;transform:scaleX(0.9046);transform-origin:0 0;">500.0 KB</div>
<div class="t" style="top:647.00px;font-size:21px;left:312.70px;transform:scaleX(1.0297);transform-origin:0 0;">sigh-gif.gif</div>
<div class="t" style="top:647.00px;font-size:21px;left:921.84px;transform:scaleX(0.9046);transform-origin:0 0;">497.7 KB</div>
<div class="t" style="top:647.00px;font-size:21px;left:1080.34px;transform:scaleX(0.9046);transform-origin:0 0;">500.0 KB</div>
<div class="t" style="top:647.00px;font-size:21px;left:1243.35px;transform:scaleX(0.9116);transform-origin:0 0;">1</div>
<div class="t" style="top:647.00px;font-size:21px;left:1331.35px;transform:scaleX(0.9116);transform-origin:0 0;">0</div>
<div class="a" style="left:1353px;top:641px;width:138px;height:33px;box-sizing:border-box;border:1px solid #a9a9a9;background:#e6e6e6"></div>
<div class="t" style="top:647.00px;font-size:21px;left:1397.47px;transform:scaleX(0.9143);transform-origin:0 0;">0.1 %</div>
<div class="t" style="top:647.00px;font-size:21px;left:1496.60px;transform:scaleX(0.9866);transform-origin:0 0;">7/2/2017</div>
<svg class="a" style="left:163px;top:680px" width="20" height="26" viewBox="0 0 20 26">
<path d="M1 1 L14 1 L19 6 L19 25 L1 25 Z" fill="#f6f8fa" stroke="#9b9b9b" stroke-width="1.2"/>
<path d="M14 1 L14 6 L19 6" fill="#e8e8e8" stroke="#9b9b9b" stroke-width="1"/>
<rect x="3.5" y="7.5" width="13" height="12.5" fill="#0a78d8"/>
<path d="M4.5 8.5 L15.5 8.5 L15.5 13 L13.5 11 L11.5 14 L8 9.5 L4.5 14 Z" fill="#fff"/>
</svg>
<div class="t" style="top:682.00px;font-size:21px;left:216.34px;transform:scaleX(0.9046);transform-origin:0 0;">484.0 KB</div>
<div class="t" style="top:682.00px;font-size:21px;left:312.70px;transform:scaleX(1.0308);transform-origin:0 0;">twitter-stats-tool.png</div>
<div class="t" style="top:682.00px;font-size:21px;left:921.84px;transform:scaleX(0.9046);transform-origin:0 0;">482.8 KB</div>
<div class="t" style="top:682.00px;font-size:21px;left:1080.34px;transform:scaleX(0.9046);transform-origin:0 0;">484.0 KB</div>
<div class="t" style="top:682.00px;font-size:21px;left:1243.35px;transform:scaleX(0.9116);transform-origin:0 0;">1</div>
<div class="t" style="top:682.00px;font-size:21px;left:1331.35px;transform:scaleX(0.9116);transform-origin:0 0;">0</div>
<div class="a" style="left:1353px;top:676px;width:138px;height:33px;box-sizing:border-box;border:1px solid #a9a9a9;background:#e6e6e6"></div>
<div class="t" style="top:682.00px;font-size:21px;left:1397.47px;transform:scaleX(0.9143);transform-origin:0 0;">0.1 %</div>
<div class="t" style="top:682.00px;font-size:21px;left:1496.60px;transform:scaleX(0.9866);transform-origin:0 0;">7/2/2017</div>
<svg class="a" style="left:163px;top:715px" width="20" height="26" viewBox="0 0 20 26">
<path d="M1 1 L14 1 L19 6 L19 25 L1 25 Z" fill="#f6f8fa" stroke="#9b9b9b" stroke-width="1.2"/>
<path d="M14 1 L14 6 L19 6" fill="#e8e8e8" stroke="#9b9b9b" stroke-width="1"/>
<rect x="3.5" y="7.5" width="13" height="12.5" fill="#0a78d8"/>
<path d="M4.5 8.5 L15.5 8.5 L15.5 13 L13.5 11 L11.5 14 L8 9.5 L4.5 14 Z" fill="#fff"/>
</svg>
<div class="t" style="top:717.00px;font-size:21px;left:216.34px;transform:scaleX(0.9046);transform-origin:0 0;">464.0 KB</div>
<div class="t" style="top:717.00px;font-size:21px;left:312.70px;transform:scaleX(0.9925);transform-origin:0 0;">celebrate-adwords.gif</div>
<div class="t" style="top:717.00px;font-size:21px;left:921.84px;transform:scaleX(0.9046);transform-origin:0 0;">460.2 KB</div>
<div class="t" style="top:717.00px;font-size:21px;left:1080.34px;transform:scaleX(0.9046);transform-origin:0 0;">464.0 KB</div>
<div class="t" style="top:717.00px;font-size:21px;left:1243.35px;transform:scaleX(0.9116);transform-origin:0 0;">1</div>
<div class="t" style="top:717.00px;font-size:21px;left:1331.35px;transform:scaleX(0.9116);transform-origin:0 0;">0</div>
<div class="a" style="left:1353px;top:711px;width:138px;height:33px;box-sizing:border-box;border:1px solid #a9a9a9;background:#e6e6e6"></div>
<div class="t" style="top:717.00px;font-size:21px;left:1397.47px;transform:scaleX(0.9143);transform-origin:0 0;">0.1 %</div>
<div class="t" style="top:717.00px;font-size:21px;left:1496.60px;transform:scaleX(0.9866);transform-origin:0 0;">7/2/2017</div>
<svg class="a" style="left:160px;top:750px" width="29" height="25" viewBox="0 0 29 25">
<path d="M8.8 2 Q9.8 0.2 12 0.2 L17 0.2 Q18.6 0.2 19.6 2 L27.6 18.2 Q28.8 20.6 27.2 22.6 L26 23.6 L4.2 23.6 Q1.2 23.6 0.4 20.8 Q0 19.2 1 17.6 Z" fill="#5c1aae"/>
<path d="M15 3.6 L26.4 20.6 L14 21.4 L6 21.8 Q4.6 21.2 5.4 19.6 Z" fill="#e466f0"/>
<path d="M16 4.8 L21 12.8 L12.5 10.5 Z" fill="#c64ae8"/>
<path d="M9 16 L14 21 L7.2 21.6 Q6 21 6.6 19.6 Z" fill="#f07af6"/>
<path d="M14.5 20.6 L26.5 20.6 L26 23.6 L14.5 23.6 Z" fill="#3e0c62"/>
<path d="M11 8.5 L19.5 21 M6.8 19.8 L18.5 12.2 M9.5 14 L24 17" stroke="#b040d8" stroke-width=".9" fill="none"/>
<circle cx="13.3" cy="14.8" r="2.2" fill="#2c0848"/>
</svg>
<div class="t" style="top:752.00px;font-size:21px;left:216.34px;transform:scaleX(0.9046);transform-origin:0 0;">460.0 KB</div>
<div class="t" style="top:752.00px;font-size:21px;left:312.70px;transform:scaleX(1.0156);transform-origin:0 0;">non-blurry-background.webp</div>
<div class="t" style="top:752.00px;font-size:21px;left:921.84px;transform:scaleX(0.9046);transform-origin:0 0;">458.6 KB</div>
<div class="t" style="top:752.00px;font-size:21px;left:1080.34px;transform:scaleX(0.9046);transform-origin:0 0;">460.0 KB</div>
<div class="t" style="top:752.00px;font-size:21px;left:1243.35px;transform:scaleX(0.9116);transform-origin:0 0;">1</div>
<div class="t" style="top:752.00px;font-size:21px;left:1331.35px;transform:scaleX(0.9116);transform-origin:0 0;">0</div>
<div class="a" style="left:1353px;top:746px;width:138px;height:33px;box-sizing:border-box;border:1px solid #a9a9a9;background:#e6e6e6"></div>
<div class="t" style="top:752.00px;font-size:21px;left:1397.47px;transform:scaleX(0.9143);transform-origin:0 0;">0.1 %</div>
<div class="t" style="top:752.00px;font-size:21px;left:1496.60px;transform:scaleX(0.9866);transform-origin:0 0;">7/2/2017</div>
<svg class="a" style="left:160px;top:785px" width="29" height="25" viewBox="0 0 29 25">
<path d="M8.8 2 Q9.8 0.2 12 0.2 L17 0.2 Q18.6 0.2 19.6 2 L27.6 18.2 Q28.8 20.6 27.2 22.6 L26 23.6 L4.2 23.6 Q1.2 23.6 0.4 20.8 Q0 19.2 1 17.6 Z" fill="#5c1aae"/>
<path d="M15 3.6 L26.4 20.6 L14 21.4 L6 21.8 Q4.6 21.2 5.4 19.6 Z" fill="#e466f0"/>
<path d="M16 4.8 L21 12.8 L12.5 10.5 Z" fill="#c64ae8"/>
<path d="M9 16 L14 21 L7.2 21.6 Q6 21 6.6 19.6 Z" fill="#f07af6"/>
<path d="M14.5 20.6 L26.5 20.6 L26 23.6 L14.5 23.6 Z" fill="#3e0c62"/>
<path d="M11 8.5 L19.5 21 M6.8 19.8 L18.5 12.2 M9.5 14 L24 17" stroke="#b040d8" stroke-width=".9" fill="none"/>
<circle cx="13.3" cy="14.8" r="2.2" fill="#2c0848"/>
</svg>
<div class="t" style="top:787.00px;font-size:21px;left:216.34px;transform:scaleX(0.9046);transform-origin:0 0;">460.0 KB</div>
<div class="t" style="top:787.00px;font-size:21px;left:312.70px;transform:scaleX(0.9695);transform-origin:0 0;">smarterqueue-stats-1024x792.webp</div>
<div class="t" style="top:787.00px;font-size:21px;left:921.84px;transform:scaleX(0.9046);transform-origin:0 0;">456.2 KB</div>
<div class="t" style="top:787.00px;font-size:21px;left:1080.34px;transform:scaleX(0.9046);transform-origin:0 0;">460.0 KB</div>
<div class="t" style="top:787.00px;font-size:21px;left:1243.35px;transform:scaleX(0.9116);transform-origin:0 0;">1</div>
<div class="t" style="top:787.00px;font-size:21px;left:1331.35px;transform:scaleX(0.9116);transform-origin:0 0;">0</div>
<div class="a" style="left:1353px;top:781px;width:138px;height:33px;box-sizing:border-box;border:1px solid #a9a9a9;background:#e6e6e6"></div>
<div class="t" style="top:787.00px;font-size:21px;left:1397.47px;transform:scaleX(0.9143);transform-origin:0 0;">0.1 %</div>
<div class="t" style="top:787.00px;font-size:21px;left:1496.60px;transform:scaleX(0.9866);transform-origin:0 0;">7/2/2017</div>
<svg class="a" style="left:160px;top:820px" width="29" height="25" viewBox="0 0 29 25">
<path d="M8.8 2 Q9.8 0.2 12 0.2 L17 0.2 Q18.6 0.2 19.6 2 L27.6 18.2 Q28.8 20.6 27.2 22.6 L26 23.6 L4.2 23.6 Q1.2 23.6 0.4 20.8 Q0 19.2 1 17.6 Z" fill="#5c1aae"/>
<path d="M15 3.6 L26.4 20.6 L14 21.4 L6 21.8 Q4.6 21.2 5.4 19.6 Z" fill="#e466f0"/>
<path d="M16 4.8 L21 12.8 L12.5 10.5 Z" fill="#c64ae8"/>
<path d="M9 16 L14 21 L7.2 21.6 Q6 21 6.6 19.6 Z" fill="#f07af6"/>
<path d="M14.5 20.6 L26.5 20.6 L26 23.6 L14.5 23.6 Z" fill="#3e0c62"/>
<path d="M11 8.5 L19.5 21 M6.8 19.8 L18.5 12.2 M9.5 14 L24 17" stroke="#b040d8" stroke-width=".9" fill="none"/>
<circle cx="13.3" cy="14.8" r="2.2" fill="#2c0848"/>
</svg>
<div class="t" style="top:822.00px;font-size:21px;left:216.34px;transform:scaleX(0.9046);transform-origin:0 0;">440.0 KB</div>
<div class="t" style="top:822.00px;font-size:21px;left:312.70px;transform:scaleX(1.0062);transform-origin:0 0;">import-3rd-party-content-for-sharing-1024x845.webp</div>
<div class="t" style="top:822.00px;font-size:21px;left:921.84px;transform:scaleX(0.9046);transform-origin:0 0;">439.5 KB</div>
<div class="t" style="top:822.00px;font-size:21px;left:1080.34px;transform:scaleX(0.9046);transform-origin:0 0;">440.0 KB</div>
<div class="t" style="top:822.00px;font-size:21px;left:1243.35px;transform:scaleX(0.9116);transform-origin:0 0;">1</div>
<div class="t" style="top:822.00px;font-size:21px;left:1331.35px;transform:scaleX(0.9116);transform-origin:0 0;">0</div>
<div class="a" style="left:1353px;top:816px;width:138px;height:33px;box-sizing:border-box;border:1px solid #a9a9a9;background:#e6e6e6"></div>
<div class="t" style="top:822.00px;font-size:21px;left:1397.47px;transform:scaleX(0.9143);transform-origin:0 0;">0.1 %</div>
<div class="t" style="top:822.00px;font-size:21px;left:1496.60px;transform:scaleX(0.9866);transform-origin:0 0;">7/2/2017</div>
<svg class="a" style="left:160px;top:855px" width="29" height="25" viewBox="0 0 29 25">
<path d="M8.8 2 Q9.8 0.2 12 0.2 L17 0.2 Q18.6 0.2 19.6 2 L27.6 18.2 Q28.8 20.6 27.2 22.6 L26 23.6 L4.2 23.6 Q1.2 23.6 0.4 20.8 Q0 19.2 1 17.6 Z" fill="#5c1aae"/>
<path d="M15 3.6 L26.4 20.6 L14 21.4 L6 21.8 Q4.6 21.2 5.4 19.6 Z" fill="#e466f0"/>
<path d="M16 4.8 L21 12.8 L12.5 10.5 Z" fill="#c64ae8"/>
<path d="M9 16 L14 21 L7.2 21.6 Q6 21 6.6 19.6 Z" fill="#f07af6"/>
<path d="M14.5 20.6 L26.5 20.6 L26 23.6 L14.5 23.6 Z" fill="#3e0c62"/>
<path d="M11 8.5 L19.5 21 M6.8 19.8 L18.5 12.2 M9.5 14 L24 17" stroke="#b040d8" stroke-width=".9" fill="none"/>
<circle cx="13.3" cy="14.8" r="2.2" fill="#2c0848"/>
</svg>
<div class="t" style="top:857.00px;font-size:21px;left:216.34px;transform:scaleX(0.9046);transform-origin:0 0;">388.0 KB</div>
<div class="t" style="top:857.00px;font-size:21px;left:312.70px;transform:scaleX(0.9934);transform-origin:0 0;">non-blurry-background-1024x358.webp</div>
<div class="t" style="top:857.00px;font-size:21px;left:921.84px;transform:scaleX(0.9046);transform-origin:0 0;">385.2 KB</div>
<div class="t" style="top:857.00px;font-size:21px;left:1080.34px;transform:scaleX(0.9046);transform-origin:0 0;">388.0 KB</div>
<div class="t" style="top:857.00px;font-size:21px;left:1243.35px;transform:scaleX(0.9116);transform-origin:0 0;">1</div>
<div class="t" style="top:857.00px;font-size:21px;left:1331.35px;transform:scaleX(0.9116);transform-origin:0 0;">0</div>
<div class="a" style="left:1353px;top:851px;width:138px;height:33px;box-sizing:border-box;border:1px solid #a9a9a9;background:#e6e6e6"></div>
<div class="t" style="top:857.00px;font-size:21px;left:1397.47px;transform:scaleX(0.9143);transform-origin:0 0;">0.1 %</div>
<div class="t" style="top:857.00px;font-size:21px;left:1496.60px;transform:scaleX(0.9866);transform-origin:0 0;">7/2/2017</div>
<svg class="a" style="left:160px;top:890px" width="29" height="25" viewBox="0 0 29 25">
<path d="M8.8 2 Q9.8 0.2 12 0.2 L17 0.2 Q18.6 0.2 19.6 2 L27.6 18.2 Q28.8 20.6 27.2 22.6 L26 23.6 L4.2 23.6 Q1.2 23.6 0.4 20.8 Q0 19.2 1 17.6 Z" fill="#5c1aae"/>
<path d="M15 3.6 L26.4 20.6 L14 21.4 L6 21.8 Q4.6 21.2 5.4 19.6 Z" fill="#e466f0"/>
<path d="M16 4.8 L21 12.8 L12.5 10.5 Z" fill="#c64ae8"/>
<path d="M9 16 L14 21 L7.2 21.6 Q6 21 6.6 19.6 Z" fill="#f07af6"/>
<path d="M14.5 20.6 L26.5 20.6 L26 23.6 L14.5 23.6 Z" fill="#3e0c62"/>
<path d="M11 8.5 L19.5 21 M6.8 19.8 L18.5 12.2 M9.5 14 L24 17" stroke="#b040d8" stroke-width=".9" fill="none"/>
<circle cx="13.3" cy="14.8" r="2.2" fill="#2c0848"/>
</svg>
<div class="t" style="top:892.00px;font-size:21px;left:216.34px;transform:scaleX(0.9046);transform-origin:0 0;">380.0 KB</div>
<div class="t" style="top:892.00px;font-size:21px;left:312.70px;transform:scaleX(1.0093);transform-origin:0 0;">rank-tracking-report-1.webp</div>
<div class="t" style="top:892.00px;font-size:21px;left:921.84px;transform:scaleX(0.9046);transform-origin:0 0;">377.9 KB</div>
<div class="t" style="top:892.00px;font-size:21px;left:1080.34px;transform:scaleX(0.9046);transform-origin:0 0;">380.0 KB</div>
<div class="t" style="top:892.00px;font-size:21px;left:1243.35px;transform:scaleX(0.9116);transform-origin:0 0;">1</div>
<div class="t" style="top:892.00px;font-size:21px;left:1331.35px;transform:scaleX(0.9116);transform-origin:0 0;">0</div>
<div class="a" style="left:1353px;top:886px;width:138px;height:33px;box-sizing:border-box;border:1px solid #a9a9a9;background:#e6e6e6"></div>
<div class="t" style="top:892.00px;font-size:21px;left:1397.47px;transform:scaleX(0.9143);transform-origin:0 0;">0.1 %</div>
<div class="t" style="top:892.00px;font-size:21px;left:1496.60px;transform:scaleX(0.9866);transform-origin:0 0;">7/2/2017</div>
<svg class="a" style="left:160px;top:925px" width="29" height="25" viewBox="0 0 29 25">
<path d="M8.8 2 Q9.8 0.2 12 0.2 L17 0.2 Q18.6 0.2 19.6 2 L27.6 18.2 Q28.8 20.6 27.2 22.6 L26 23.6 L4.2 23.6 Q1.2 23.6 0.4 20.8 Q0 19.2 1 17.6 Z" fill="#5c1aae"/>
<path d="M15 3.6 L26.4 20.6 L14 21.4 L6 21.8 Q4.6 21.2 5.4 19.6 Z" fill="#e466f0"/>
<path d="M16 4.8 L21 12.8 L12.5 10.5 Z" fill="#c64ae8"/>
<path d="M9 16 L14 21 L7.2 21.6 Q6 21 6.6 19.6 Z" fill="#f07af6"/>
<path d="M14.5 20.6 L26.5 20.6 L26 23.6 L14.5 23.6 Z" fill="#3e0c62"/>
<path d="M11 8.5 L19.5 21 M6.8 19.8 L18.5 12.2 M9.5 14 L24 17" stroke="#b040d8" stroke-width=".9" fill="none"/>
<circle cx="13.3" cy="14.8" r="2.2" fill="#2c0848"/>
</svg>
<div class="t" style="top:927.00px;font-size:21px;left:216.34px;transform:scaleX(0.9046);transform-origin:0 0;">364.0 KB</div>
<div class="t" style="top:927.00px;font-size:21px;left:312.70px;transform:scaleX(0.9759);transform-origin:0 0;">smarterqueue-dashboard-1024x791.webp</div>
<div class="t" style="top:927.00px;font-size:21px;left:921.84px;transform:scaleX(0.9046);transform-origin:0 0;">360.2 KB</div>
<div class="t" style="top:927.00px;font-size:21px;left:1080.34px;transform:scaleX(0.9046);transform-origin:0 0;">364.0 KB</div>
<div class="t" style="top:927.00px;font-size:21px;left:1243.35px;transform:scaleX(0.9116);transform-origin:0 0;">1</div>
<div class="t" style="top:927.00px;font-size:21px;left:1331.35px;transform:scaleX(0.9116);transform-origin:0 0;">0</div>
<div class="a" style="left:1353px;top:921px;width:138px;height:33px;box-sizing:border-box;border:1px solid #a9a9a9;background:#e6e6e6"></div>
<div class="t" style="top:927.00px;font-size:21px;left:1397.47px;transform:scaleX(0.9143);transform-origin:0 0;">0.1 %</div>
<div class="t" style="top:927.00px;font-size:21px;left:1496.60px;transform:scaleX(0.9866);transform-origin:0 0;">7/2/2017</div>
<svg class="a" style="left:160px;top:960px" width="29" height="25" viewBox="0 0 29 25">
<path d="M8.8 2 Q9.8 0.2 12 0.2 L17 0.2 Q18.6 0.2 19.6 2 L27.6 18.2 Q28.8 20.6 27.2 22.6 L26 23.6 L4.2 23.6 Q1.2 23.6 0.4 20.8 Q0 19.2 1 17.6 Z" fill="#5c1aae"/>
<path d="M15 3.6 L26.4 20.6 L14 21.4 L6 21.8 Q4.6 21.2 5.4 19.6 Z" fill="#e466f0"/>
<path d="M16 4.8 L21 12.8 L12.5 10.5 Z" fill="#c64ae8"/>
<path d="M9 16 L14 21 L7.2 21.6 Q6 21 6.6 19.6 Z" fill="#f07af6"/>
<path d="M14.5 20.6 L26.5 20.6 L26 23.6 L14.5 23.6 Z" fill="#3e0c62"/>
<path d="M11 8.5 L19.5 21 M6.8 19.8 L18.5 12.2 M9.5 14 L24 17" stroke="#b040d8" stroke-width=".9" fill="none"/>
<circle cx="13.3" cy="14.8" r="2.2" fill="#2c0848"/>
</svg>
<div class="t" style="top:962.00px;font-size:21px;left:216.34px;transform:scaleX(0.9046);transform-origin:0 0;">348.0 KB</div>
<div class="t" style="top:962.00px;font-size:21px;left:312.70px;transform:scaleX(0.9711);transform-origin:0 0;">smarterqueue-schedule-1024x796.webp</div>
<div class="t" style="top:962.00px;font-size:21px;left:921.84px;transform:scaleX(0.9046);transform-origin:0 0;">345.0 KB</div>
<div class="t" style="top:962.00px;font-size:21px;left:1080.34px;transform:scaleX(0.9046);transform-origin:0 0;">348.0 KB</div>
<div class="t" style="top:962.00px;font-size:21px;left:1243.35px;transform:scaleX(0.9116);transform-origin:0 0;">1</div>
<div class="t" style="top:962.00px;font-size:21px;left:1331.35px;transform:scaleX(0.9116);transform-origin:0 0;">0</div>
<div class="a" style="left:1353px;top:956px;width:138px;height:33px;box-sizing:border-box;border:1px solid #a9a9a9;background:#e6e6e6"></div>
<div class="t" style="top:962.00px;font-size:21px;left:1397.47px;transform:scaleX(0.9143);transform-origin:0 0;">0.1 %</div>
<div class="t" style="top:962.00px;font-size:21px;left:1496.60px;transform:scaleX(0.9866);transform-origin:0 0;">7/2/2017</div>
<svg class="a" style="left:163px;top:995px" width="20" height="26" viewBox="0 0 20 26">
<path d="M1 1 L14 1 L19 6 L19 25 L1 25 Z" fill="#f6f8fa" stroke="#9b9b9b" stroke-width="1.2"/>
<path d="M14 1 L14 6 L19 6" fill="#e8e8e8" stroke="#9b9b9b" stroke-width="1"/>
<rect x="3.5" y="7.5" width="13" height="12.5" fill="#0a78d8"/>
<path d="M4.5 8.5 L15.5 8.5 L15.5 13 L13.5 11 L11.5 14 L8 9.5 L4.5 14 Z" fill="#fff"/>
</svg>
<div class="t" style="top:997.00px;font-size:21px;left:216.34px;transform:scaleX(0.9046);transform-origin:0 0;">340.0 KB</div>
<div class="t" style="top:997.00px;font-size:21px;left:312.70px;transform:scaleX(1.0049);transform-origin:0 0;">buffer-this-animated-gif-768x340.png</div>
<div class="t" style="top:997.00px;font-size:21px;left:921.84px;transform:scaleX(0.9046);transform-origin:0 0;">336.5 KB</div>
<div class="t" style="top:997.00px;font-size:21px;left:1080.34px;transform:scaleX(0.9046);transform-origin:0 0;">340.0 KB</div>
<div class="t" style="top:997.00px;font-size:21px;left:1243.35px;transform:scaleX(0.9116);transform-origin:0 0;">1</div>
<div class="t" style="top:997.00px;font-size:21px;left:1331.35px;transform:scaleX(0.9116);transform-origin:0 0;">0</div>
<div class="a" style="left:1353px;top:991px;width:138px;height:33px;box-sizing:border-box;border:1px solid #a9a9a9;background:#e6e6e6"></div>
<div class="t" style="top:997.00px;font-size:21px;left:1397.47px;transform:scaleX(0.9143);transform-origin:0 0;">0.1 %</div>
<div class="t" style="top:997.00px;font-size:21px;left:1496.60px;transform:scaleX(0.9866);transform-origin:0 0;">7/2/2017</div>
<svg class="a" style="left:160px;top:1030px" width="29" height="25" viewBox="0 0 29 25">
<path d="M8.8 2 Q9.8 0.2 12 0.2 L17 0.2 Q18.6 0.2 19.6 2 L27.6 18.2 Q28.8 20.6 27.2 22.6 L26 23.6 L4.2 23.6 Q1.2 23.6 0.4 20.8 Q0 19.2 1 17.6 Z" fill="#5c1aae"/>
<path d="M15 3.6 L26.4 20.6 L14 21.4 L6 21.8 Q4.6 21.2 5.4 19.6 Z" fill="#e466f0"/>
<path d="M16 4.8 L21 12.8 L12.5 10.5 Z" fill="#c64ae8"/>
<path d="M9 16 L14 21 L7.2 21.6 Q6 21 6.6 19.6 Z" fill="#f07af6"/>
<path d="M14.5 20.6 L26.5 20.6 L26 23.6 L14.5 23.6 Z" fill="#3e0c62"/>
<path d="M11 8.5 L19.5 21 M6.8 19.8 L18.5 12.2 M9.5 14 L24 17" stroke="#b040d8" stroke-width=".9" fill="none"/>
<circle cx="13.3" cy="14.8" r="2.2" fill="#2c0848"/>
</svg>
<div class="t" style="top:1031.99px;font-size:21px;left:216.34px;transform:scaleX(0.9046);transform-origin:0 0;">340.0 KB</div>
<div class="t" style="top:1031.99px;font-size:21px;left:312.70px;transform:scaleX(0.9870);transform-origin:0 0;">instagram-bluestacks-filters.webp</div>
<div class="t" style="top:1031.99px;font-size:21px;left:921.84px;transform:scaleX(0.9046);transform-origin:0 0;">336.1 KB</div>
<div class="t" style="top:1031.99px;font-size:21px;left:1080.34px;transform:scaleX(0.9046);transform-origin:0 0;">340.0 KB</div>
<div class="t" style="top:1031.99px;font-size:21px;left:1243.35px;transform:scaleX(0.9116);transform-origin:0 0;">1</div>
<div class="t" style="top:1031.99px;font-size:21px;left:1331.35px;transform:scaleX(0.9116);transform-origin:0 0;">0</div>
<div class="a" style="left:1353px;top:1026px;width:138px;height:33px;box-sizing:border-box;border:1px solid #a9a9a9;background:#e6e6e6"></div>
<div class="t" style="top:1031.99px;font-size:21px;left:1397.47px;transform:scaleX(0.9143);transform-origin:0 0;">0.1 %</div>
<div class="t" style="top:1031.99px;font-size:21px;left:1496.60px;transform:scaleX(0.9866);transform-origin:0 0;">7/2/2017</div>
<svg class="a" style="left:160px;top:1065px" width="29" height="25" viewBox="0 0 29 25">
<path d="M8.8 2 Q9.8 0.2 12 0.2 L17 0.2 Q18.6 0.2 19.6 2 L27.6 18.2 Q28.8 20.6 27.2 22.6 L26 23.6 L4.2 23.6 Q1.2 23.6 0.4 20.8 Q0 19.2 1 17.6 Z" fill="#5c1aae"/>
<path d="M15 3.6 L26.4 20.6 L14 21.4 L6 21.8 Q4.6 21.2 5.4 19.6 Z" fill="#e466f0"/>
<path d="M16 4.8 L21 12.8 L12.5 10.5 Z" fill="#c64ae8"/>
<path d="M9 16 L14 21 L7.2 21.6 Q6 21 6.6 19.6 Z" fill="#f07af6"/>
<path d="M14.5 20.6 L26.5 20.6 L26 23.6 L14.5 23.6 Z" fill="#3e0c62"/>
<path d="M11 8.5 L19.5 21 M6.8 19.8 L18.5 12.2 M9.5 14 L24 17" stroke="#b040d8" stroke-width=".9" fill="none"/>
<circle cx="13.3" cy="14.8" r="2.2" fill="#2c0848"/>
</svg>
<div class="t" style="top:1066.99px;font-size:21px;left:216.34px;transform:scaleX(0.9046);transform-origin:0 0;">328.0 KB</div>
<div class="t" style="top:1066.99px;font-size:21px;left:312.70px;transform:scaleX(1.0148);transform-origin:0 0;">google-plus-template.webp</div>
<div class="t" style="top:1066.99px;font-size:21px;left:921.84px;transform:scaleX(0.9046);transform-origin:0 0;">324.1 KB</div>
<div class="t" style="top:1066.99px;font-size:21px;left:1080.34px;transform:scaleX(0.9046);transform-origin:0 0;">328.0 KB</div>
<div class="t" style="top:1066.99px;font-size:21px;left:1243.35px;transform:scaleX(0.9116);transform-origin:0 0;">1</div>
<div class="t" style="top:1066.99px;font-size:21px;left:1331.35px;transform:scaleX(0.9116);transform-origin:0 0;">0</div>
<div class="a" style="left:1353px;top:1061px;width:138px;height:33px;box-sizing:border-box;border:1px solid #a9a9a9;background:#e6e6e6"></div>
<div class="t" style="top:1066.99px;font-size:21px;left:1397.47px;transform:scaleX(0.9143);transform-origin:0 0;">0.1 %</div>
<div class="t" style="top:1066.99px;font-size:21px;left:1496.60px;transform:scaleX(0.9866);transform-origin:0 0;">7/2/2017</div>
<svg class="a" style="left:160px;top:1100px" width="29" height="25" viewBox="0 0 29 25">
<path d="M8.8 2 Q9.8 0.2 12 0.2 L17 0.2 Q18.6 0.2 19.6 2 L27.6 18.2 Q28.8 20.6 27.2 22.6 L26 23.6 L4.2 23.6 Q1.2 23.6 0.4 20.8 Q0 19.2 1 17.6 Z" fill="#5c1aae"/>
<path d="M15 3.6 L26.4 20.6 L14 21.4 L6 21.8 Q4.6 21.2 5.4 19.6 Z" fill="#e466f0"/>
<path d="M16 4.8 L21 12.8 L12.5 10.5 Z" fill="#c64ae8"/>
<path d="M9 16 L14 21 L7.2 21.6 Q6 21 6.6 19.6 Z" fill="#f07af6"/>
<path d="M14.5 20.6 L26.5 20.6 L26 23.6 L14.5 23.6 Z" fill="#3e0c62"/>
<path d="M11 8.5 L19.5 21 M6.8 19.8 L18.5 12.2 M9.5 14 L24 17" stroke="#b040d8" stroke-width=".9" fill="none"/>
<circle cx="13.3" cy="14.8" r="2.2" fill="#2c0848"/>
</svg>
<div class="t" style="top:1101.99px;font-size:21px;left:216.34px;transform:scaleX(0.9046);transform-origin:0 0;">312.0 KB</div>
<div class="t" style="top:1101.99px;font-size:21px;left:312.70px;transform:scaleX(0.9803);transform-origin:0 0;">browserling-ie9-768x581.webp</div>
<div class="t" style="top:1101.99px;font-size:21px;left:921.84px;transform:scaleX(0.9213);transform-origin:0 0;">311.6 KB</div>
<div class="t" style="top:1101.99px;font-size:21px;left:1080.34px;transform:scaleX(0.9046);transform-origin:0 0;">312.0 KB</div>
<div class="t" style="top:1101.99px;font-size:21px;left:1243.35px;transform:scaleX(0.9116);transform-origin:0 0;">1</div>
<div class="t" style="top:1101.99px;font-size:21px;left:1331.35px;transform:scaleX(0.9116);transform-origin:0 0;">0</div>
<div class="a" style="left:1353px;top:1096px;width:138px;height:33px;box-sizing:border-box;border:1px solid #a9a9a9;background:#e6e6e6"></div>
<div class="t" style="top:1101.99px;font-size:21px;left:1397.47px;transform:scaleX(0.9143);transform-origin:0 0;">0.1 %</div>
<div class="t" style="top:1101.99px;font-size:21px;left:1496.60px;transform:scaleX(0.9866);transform-origin:0 0;">7/2/2017</div>
<svg class="a" style="left:160px;top:1135px" width="29" height="25" viewBox="0 0 29 25">
<path d="M8.8 2 Q9.8 0.2 12 0.2 L17 0.2 Q18.6 0.2 19.6 2 L27.6 18.2 Q28.8 20.6 27.2 22.6 L26 23.6 L4.2 23.6 Q1.2 23.6 0.4 20.8 Q0 19.2 1 17.6 Z" fill="#5c1aae"/>
<path d="M15 3.6 L26.4 20.6 L14 21.4 L6 21.8 Q4.6 21.2 5.4 19.6 Z" fill="#e466f0"/>
<path d="M16 4.8 L21 12.8 L12.5 10.5 Z" fill="#c64ae8"/>
<path d="M9 16 L14 21 L7.2 21.6 Q6 21 6.6 19.6 Z" fill="#f07af6"/>
<path d="M14.5 20.6 L26.5 20.6 L26 23.6 L14.5 23.6 Z" fill="#3e0c62"/>
<path d="M11 8.5 L19.5 21 M6.8 19.8 L18.5 12.2 M9.5 14 L24 17" stroke="#b040d8" stroke-width=".9" fill="none"/>
<circle cx="13.3" cy="14.8" r="2.2" fill="#2c0848"/>
</svg>
<div class="t" style="top:1136.99px;font-size:21px;left:216.34px;transform:scaleX(0.9046);transform-origin:0 0;">312.0 KB</div>
<div class="t" style="top:1136.99px;font-size:21px;left:312.70px;transform:scaleX(1.0084);transform-origin:0 0;">nogluten-newspaper-mythemeshop-theme.webp</div>
<div class="t" style="top:1136.99px;font-size:21px;left:921.84px;transform:scaleX(0.9046);transform-origin:0 0;">310.5 KB</div>
<div class="t" style="top:1136.99px;font-size:21px;left:1080.34px;transform:scaleX(0.9046);transform-origin:0 0;">312.0 KB</div>
<div class="t" style="top:1136.99px;font-size:21px;left:1243.35px;transform:scaleX(0.9116);transform-origin:0 0;">1</div>
<div class="t" style="top:1136.99px;font-size:21px;left:1331.35px;transform:scaleX(0.9116);transform-origin:0 0;">0</div>
<div class="a" style="left:1353px;top:1131px;width:138px;height:33px;box-sizing:border-box;border:1px solid #a9a9a9;background:#e6e6e6"></div>
<div class="t" style="top:1136.99px;font-size:21px;left:1397.47px;transform:scaleX(0.9143);transform-origin:0 0;">0.1 %</div>
<div class="t" style="top:1136.99px;font-size:21px;left:1496.60px;transform:scaleX(0.9866);transform-origin:0 0;">7/2/2017</div>
<svg class="a" style="left:163px;top:1170px" width="20" height="26" viewBox="0 0 20 26">
<path d="M1 1 L14 1 L19 6 L19 25 L1 25 Z" fill="#f6f8fa" stroke="#9b9b9b" stroke-width="1.2"/>
<path d="M14 1 L14 6 L19 6" fill="#e8e8e8" stroke="#9b9b9b" stroke-width="1"/>
<rect x="3.5" y="7.5" width="13" height="12.5" fill="#0a78d8"/>
<path d="M4.5 8.5 L15.5 8.5 L15.5 13 L13.5 11 L11.5 14 L8 9.5 L4.5 14 Z" fill="#fff"/>
</svg>
<div class="t" style="top:1171.99px;font-size:21px;left:216.34px;transform:scaleX(0.9046);transform-origin:0 0;">296.0 KB</div>
<div class="t" style="top:1171.99px;font-size:21px;left:312.70px;transform:scaleX(0.9736);transform-origin:0 0;">dcl-settings-568x1024.png</div>
<div class="t" style="top:1171.99px;font-size:21px;left:921.84px;transform:scaleX(0.9046);transform-origin:0 0;">295.8 KB</div>
<div class="t" style="top:1171.99px;font-size:21px;left:1080.34px;transform:scaleX(0.9046);transform-origin:0 0;">296.0 KB</div>
<div class="t" style="top:1171.99px;font-size:21px;left:1243.35px;transform:scaleX(0.9116);transform-origin:0 0;">1</div>
<div class="t" style="top:1171.99px;font-size:21px;left:1331.35px;transform:scaleX(0.9116);transform-origin:0 0;">0</div>
<div class="a" style="left:1353px;top:1166px;width:138px;height:33px;box-sizing:border-box;border:1px solid #a9a9a9;background:#e6e6e6"></div>
<div class="t" style="top:1171.99px;font-size:21px;left:1397.47px;transform:scaleX(0.9143);transform-origin:0 0;">0.1 %</div>
<div class="t" style="top:1171.99px;font-size:21px;left:1496.60px;transform:scaleX(0.9866);transform-origin:0 0;">7/2/2017</div>
<svg class="a" style="left:160px;top:1205px" width="29" height="25" viewBox="0 0 29 25">
<path d="M8.8 2 Q9.8 0.2 12 0.2 L17 0.2 Q18.6 0.2 19.6 2 L27.6 18.2 Q28.8 20.6 27.2 22.6 L26 23.6 L4.2 23.6 Q1.2 23.6 0.4 20.8 Q0 19.2 1 17.6 Z" fill="#5c1aae"/>
<path d="M15 3.6 L26.4 20.6 L14 21.4 L6 21.8 Q4.6 21.2 5.4 19.6 Z" fill="#e466f0"/>
<path d="M16 4.8 L21 12.8 L12.5 10.5 Z" fill="#c64ae8"/>
<path d="M9 16 L14 21 L7.2 21.6 Q6 21 6.6 19.6 Z" fill="#f07af6"/>
<path d="M14.5 20.6 L26.5 20.6 L26 23.6 L14.5 23.6 Z" fill="#3e0c62"/>
<path d="M11 8.5 L19.5 21 M6.8 19.8 L18.5 12.2 M9.5 14 L24 17" stroke="#b040d8" stroke-width=".9" fill="none"/>
<circle cx="13.3" cy="14.8" r="2.2" fill="#2c0848"/>
</svg>
<div class="t" style="top:1206.99px;font-size:21px;left:216.34px;transform:scaleX(0.9046);transform-origin:0 0;">292.0 KB</div>
<div class="t" style="top:1206.99px;font-size:21px;left:312.70px;transform:scaleX(0.9700);transform-origin:0 0;">social-metrics-tracker-772x350.webp</div>
<div class="t" style="top:1206.99px;font-size:21px;left:921.84px;transform:scaleX(0.9046);transform-origin:0 0;">291.2 KB</div>
<div class="t" style="top:1206.99px;font-size:21px;left:1080.34px;transform:scaleX(0.9046);transform-origin:0 0;">292.0 KB</div>
<div class="t" style="top:1206.99px;font-size:21px;left:1243.35px;transform:scaleX(0.9116);transform-origin:0 0;">1</div>
<div class="t" style="top:1206.99px;font-size:21px;left:1331.35px;transform:scaleX(0.9116);transform-origin:0 0;">0</div>
<div class="a" style="left:1353px;top:1201px;width:138px;height:33px;box-sizing:border-box;border:1px solid #a9a9a9;background:#e6e6e6"></div>
<div class="t" style="top:1206.99px;font-size:21px;left:1397.47px;transform:scaleX(0.9143);transform-origin:0 0;">0.1 %</div>
<div class="t" style="top:1206.99px;font-size:21px;left:1496.60px;transform:scaleX(0.9866);transform-origin:0 0;">7/2/2017</div>
<svg class="a" style="left:160px;top:1240px" width="29" height="25" viewBox="0 0 29 25">
<path d="M8.8 2 Q9.8 0.2 12 0.2 L17 0.2 Q18.6 0.2 19.6 2 L27.6 18.2 Q28.8 20.6 27.2 22.6 L26 23.6 L4.2 23.6 Q1.2 23.6 0.4 20.8 Q0 19.2 1 17.6 Z" fill="#5c1aae"/>
<path d="M15 3.6 L26.4 20.6 L14 21.4 L6 21.8 Q4.6 21.2 5.4 19.6 Z" fill="#e466f0"/>
<path d="M16 4.8 L21 12.8 L12.5 10.5 Z" fill="#c64ae8"/>
<path d="M9 16 L14 21 L7.2 21.6 Q6 21 6.6 19.6 Z" fill="#f07af6"/>
<path d="M14.5 20.6 L26.5 20.6 L26 23.6 L14.5 23.6 Z" fill="#3e0c62"/>
<path d="M11 8.5 L19.5 21 M6.8 19.8 L18.5 12.2 M9.5 14 L24 17" stroke="#b040d8" stroke-width=".9" fill="none"/>
<circle cx="13.3" cy="14.8" r="2.2" fill="#2c0848"/>
</svg>
<div class="t" style="top:1241.99px;font-size:21px;left:216.34px;transform:scaleX(0.9046);transform-origin:0 0;">288.0 KB</div>
<div class="t" style="top:1241.99px;font-size:21px;left:312.80px;transform:scaleX(0.9875);transform-origin:0 0;">wp-rocket-comparison-768x831.webp</div>
<div class="t" style="top:1241.99px;font-size:21px;left:921.84px;transform:scaleX(0.9046);transform-origin:0 0;">286.4 KB</div>
<div class="t" style="top:1241.99px;font-size:21px;left:1080.34px;transform:scaleX(0.9046);transform-origin:0 0;">288.0 KB</div>
<div class="t" style="top:1241.99px;font-size:21px;left:1243.35px;transform:scaleX(0.9116);transform-origin:0 0;">1</div>
<div class="t" style="top:1241.99px;font-size:21px;left:1331.35px;transform:scaleX(0.9116);transform-origin:0 0;">0</div>
<div class="a" style="left:1353px;top:1236px;width:138px;height:33px;box-sizing:border-box;border:1px solid #a9a9a9;background:#e6e6e6"></div>
<div class="t" style="top:1241.99px;font-size:21px;left:1397.47px;transform:scaleX(0.9143);transform-origin:0 0;">0.1 %</div>
<div class="t" style="top:1241.99px;font-size:21px;left:1496.60px;transform:scaleX(0.9866);transform-origin:0 0;">7/2/2017</div>
<svg class="a" style="left:160px;top:1275px" width="29" height="25" viewBox="0 0 29 25">
<path d="M8.8 2 Q9.8 0.2 12 0.2 L17 0.2 Q18.6 0.2 19.6 2 L27.6 18.2 Q28.8 20.6 27.2 22.6 L26 23.6 L4.2 23.6 Q1.2 23.6 0.4 20.8 Q0 19.2 1 17.6 Z" fill="#5c1aae"/>
<path d="M15 3.6 L26.4 20.6 L14 21.4 L6 21.8 Q4.6 21.2 5.4 19.6 Z" fill="#e466f0"/>
<path d="M16 4.8 L21 12.8 L12.5 10.5 Z" fill="#c64ae8"/>
<path d="M9 16 L14 21 L7.2 21.6 Q6 21 6.6 19.6 Z" fill="#f07af6"/>
<path d="M14.5 20.6 L26.5 20.6 L26 23.6 L14.5 23.6 Z" fill="#3e0c62"/>
<path d="M11 8.5 L19.5 21 M6.8 19.8 L18.5 12.2 M9.5 14 L24 17" stroke="#b040d8" stroke-width=".9" fill="none"/>
<circle cx="13.3" cy="14.8" r="2.2" fill="#2c0848"/>
</svg>
<div class="t" style="top:1276.99px;font-size:21px;left:216.34px;transform:scaleX(0.9046);transform-origin:0 0;">284.0 KB</div>
<div class="t" style="top:1276.99px;font-size:21px;left:312.70px;transform:scaleX(0.9729);transform-origin:0 0;">dcl-settings-568x1024.webp</div>
<div class="t" style="top:1276.99px;font-size:21px;left:921.84px;transform:scaleX(0.9046);transform-origin:0 0;">283.2 KB</div>
<div class="t" style="top:1276.99px;font-size:21px;left:1080.34px;transform:scaleX(0.9046);transform-origin:0 0;">284.0 KB</div>
<div class="t" style="top:1276.99px;font-size:21px;left:1243.35px;transform:scaleX(0.9116);transform-origin:0 0;">1</div>
<div class="t" style="top:1276.99px;font-size:21px;left:1331.35px;transform:scaleX(0.9116);transform-origin:0 0;">0</div>
<div class="a" style="left:1353px;top:1271px;width:138px;height:33px;box-sizing:border-box;border:1px solid #a9a9a9;background:#e6e6e6"></div>
<div class="t" style="top:1276.99px;font-size:21px;left:1397.47px;transform:scaleX(0.9143);transform-origin:0 0;">0.1 %</div>
<div class="t" style="top:1276.99px;font-size:21px;left:1496.60px;transform:scaleX(0.9866);transform-origin:0 0;">7/2/2017</div>
</div>
<div class="a" style="left:1668px;top:290px;width:27px;height:1007px;background:#f0f0f0;"></div>
<div class="a" style="left:1668px;top:320px;width:27px;height:30px;background:#cdcdcd;"></div>
<svg class="a" style="left:1675px;top:300px" width="15" height="13"><path d="M1.5 10.5 L7.5 3 L13.5 10.5" fill="none" stroke="#606060" stroke-width="2.6"/></svg>
<svg class="a" style="left:1675px;top:1276px" width="15" height="13"><path d="M1.5 2.5 L7.5 10 L13.5 2.5" fill="none" stroke="#606060" stroke-width="2.6"/></svg>
<div class="a" style="left:0px;top:1297px;width:1695px;height:2px;background:#e6e6e6;"></div>
<div class="a" style="left:0px;top:1299px;width:1695px;height:2px;background:#909296;"></div>
<div class="a" style="left:0px;top:1301px;width:1695px;height:35px;background:#f0f0f0;"></div>
<div class="a" style="left:364px;top:1303px;width:1px;height:33px;background:#d7d7d7;"></div>
<div class="a" style="left:574px;top:1303px;width:1px;height:33px;background:#d7d7d7;"></div>
<div class="a" style="left:749px;top:1303px;width:1px;height:33px;background:#d7d7d7;"></div>
<div class="t" style="top:1309.69px;font-size:21px;left:0.50px;transform:scaleX(0.9228);transform-origin:0 0;">Free Space: 89.1 GB  (of 226 GB)</div>
<div class="t" style="top:1309.69px;font-size:21px;left:369.00px;transform:scaleX(0.9233);transform-origin:0 0;">28,039  Files</div>
<div class="t" style="top:1309.69px;font-size:21px;left:579.00px;transform:scaleX(0.9524);transform-origin:0 0;">0 Excluded</div>
<div class="t" style="top:1309.69px;font-size:21px;left:754.00px;transform:scaleX(1.0075);transform-origin:0 0;">C:\Users\brianleejackson\Desktop\wp-content\uploads\2016\04\twitter-stats-tool-768x3119.png</div>
<svg class="a" style="left:1684px;top:1324px" width="11" height="12"><g fill="#a8a8a8"><rect x="7" y="0" width="3" height="3"/><rect x="3" y="4" width="3" height="3"/><rect x="7" y="4" width="3" height="3"/><rect x="0" y="8" width="3" height="3"/><rect x="3.5" y="8" width="3" height="3"/><rect x="7" y="8" width="3" height="3"/></g></svg>
</body></html>
